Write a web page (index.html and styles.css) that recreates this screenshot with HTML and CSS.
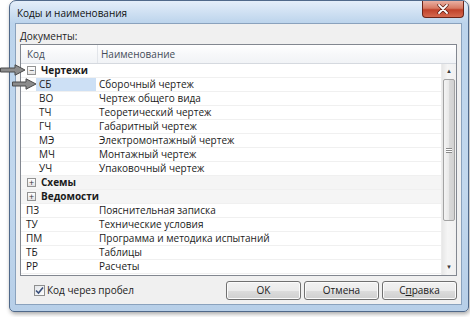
FILE: index.html
```html
<!DOCTYPE html>
<html lang="ru">
<head>
    <meta charset="UTF-8">
    <title>Коды и наименования</title>
    <link rel="stylesheet" href="styles.css">
</head>
<body>

    <!-- Dialog window -->
    <div class="window">
        <div class="titlebar">
            <span class="title">Коды и наименования</span>
            <span class="close-btn">
                <svg width="12" height="10" viewBox="0 0 12 10">
                    <path d="M2 1 L10 9 M10 1 L2 9" stroke="#5a1a10" stroke-width="3.2" stroke-linecap="round"/>
                    <path d="M2 1 L10 9 M10 1 L2 9" stroke="#fff" stroke-width="1.8" stroke-linecap="round"/>
                </svg>
            </span>
        </div>

        <div class="client">
            <div class="label">Документы:</div>

            <!-- Codes list -->
            <div class="list">
                <div class="list-header">
                    <div class="col-code">Код</div>
                    <div class="col-name">Наименование</div>
                </div>
                <div class="list-body">
                    <div class="rows">
                        <div class="row group"><span class="expander">&minus;</span><b>Чертежи</b></div>
                        <div class="row child selected"><span class="code"><span>СБ</span></span><span class="name">Сборочный чертеж</span></div>
                        <div class="row child"><span class="code"><span>ВО</span></span><span class="name">Чертеж общего вида</span></div>
                        <div class="row child"><span class="code"><span>ТЧ</span></span><span class="name">Теоретический чертеж</span></div>
                        <div class="row child"><span class="code"><span>ГЧ</span></span><span class="name">Габаритный чертеж</span></div>
                        <div class="row child"><span class="code"><span>МЭ</span></span><span class="name">Электромонтажный чертеж</span></div>
                        <div class="row child"><span class="code"><span>МЧ</span></span><span class="name">Монтажный чертеж</span></div>
                        <div class="row child"><span class="code"><span>УЧ</span></span><span class="name">Упаковочный чертеж</span></div>
                        <div class="row group closed"><span class="expander">+</span><b>Схемы</b></div>
                        <div class="row group closed"><span class="expander">+</span><b>Ведомости</b></div>
                        <div class="row top"><span class="code">ПЗ</span><span class="name">Пояснительная записка</span></div>
                        <div class="row top"><span class="code">ТУ</span><span class="name">Технические условия</span></div>
                        <div class="row top"><span class="code">ПМ</span><span class="name">Программа и методика испытаний</span></div>
                        <div class="row top"><span class="code">ТБ</span><span class="name">Таблицы</span></div>
                        <div class="row top"><span class="code">РР</span><span class="name">Расчеты</span></div>
                    </div>
                    <div class="scrollbar">
                        <div class="sb-btn">&#9650;</div>
                        <div class="sb-thumb"><span class="grip"></span></div>
                        <div class="sb-track"></div>
                        <div class="sb-btn">&#9660;</div>
                    </div>
                </div>
            </div>

            <!-- Footer -->
            <div class="footer">
                <label class="check">
                    <span class="checkbox">
                        <svg width="9" height="9" viewBox="0 0 9 9">
                            <path d="M1 4.5 L3.5 7 L8 1.5" fill="none" stroke="#3a4f7a" stroke-width="1.6"/>
                        </svg>
                    </span>
                    Код через пробел
                </label>
                <div class="buttons">
                    <button class="btn">OK</button>
                    <button class="btn">Отмена</button>
                    <button class="btn">С<u>п</u>равка</button>
                </div>
            </div>
        </div>
    </div>

    <!-- Pointer arrows over the tree -->
    <svg class="arrow arrow-group" width="26" height="12" viewBox="0 0 26 12">
        <path d="M0.5 4 H15 V0.8 L25 6 L15 11.2 V8 H0.5 Z" fill="#8c8c8c" stroke="#4a4a4a" stroke-width="1"/>
    </svg>
    <svg class="arrow arrow-item" width="25" height="12" viewBox="0 0 25 12">
        <path d="M0.5 4 H14 V0.8 L24 6 L14 11.2 V8 H0.5 Z" fill="#8c8c8c" stroke="#4a4a4a" stroke-width="1"/>
    </svg>

</body>
</html>
```

FILE: styles.css
```css
/* Reset */
* {
    margin: 0;
    padding: 0;
    box-sizing: border-box;
}

body {
    width: 470px;
    height: 317px;
    background: #fff;
    font-family: "Open Sans", "Noto Sans", sans-serif;
    font-size: 10px;
    color: #1b1b1b;
    overflow: hidden;
    position: relative;
}

/* Window frame */
.window {
    margin-left: 9px;
    width: 460px;
    height: 312px;
    border: 1px solid #50698a;
    border-radius: 7px 7px 5px 5px;
    background: linear-gradient(#e4eef9, #bcd4ec 22px, #c2d8ee 60%, #b7cfe8);
    padding: 0 6px 6px 5px;
    box-shadow: 1px 2px 4px rgba(0, 0, 0, 0.35);
    display: flex;
    flex-direction: column;
}

.titlebar {
    height: 22px;
    display: flex;
    justify-content: space-between;
}

.title {
    font-size: 10px;
    line-height: 24px;
    padding-left: 2px;
    color: #111;
}

.close-btn {
    width: 42px;
    height: 17px;
    margin-right: -2px;
    border: 1px solid #6b2418;
    border-top: none;
    border-radius: 0 0 4px 4px;
    background: linear-gradient(#eab0a2, #d77a63 45%, #c0422a 55%, #d5694f);
    display: flex;
    align-items: center;
    justify-content: center;
}

/* Client area */
.client {
    flex: 1;
    background: #f0f0f0;
    border: 1px solid #8aa2bd;
    padding: 4px 4px 0 4px;
    display: flex;
    flex-direction: column;
}

.label {
    height: 16px;
    line-height: 16px;
    color: #222;
}

/* List view */
.list {
    height: 232px;
    border: 1px solid #828790;
    background: #fff;
}

.list-header {
    height: 19px;
    display: grid;
    grid-template-columns: 77px 1fr;
    background: linear-gradient(#ffffff, #f7f8fa 50%, #f1f3f6);
    border-bottom: 1px solid #d5d9df;
    color: #444c58;
    line-height: 18px;
}

.col-code {
    padding-left: 6px;
    border-right: 1px solid #e2e5ea;
}

.col-name {
    padding-left: 3px;
}

.list-body {
    height: 211px;
    display: flex;
}

.rows {
    flex: 1;
}

.row {
    height: 14px;
    line-height: 13px;
    border-bottom: 1px solid #f0f0f0;
    display: grid;
    grid-template-columns: 77px 1fr;
    white-space: nowrap;
}

.row.group {
    display: flex;
    align-items: center;
}

.row.closed {
    background: #f5f5f5;
}

.expander {
    width: 9px;
    height: 9px;
    margin: 0 5px 0 6px;
    border: 1px solid #929292;
    background: linear-gradient(#fff, #e4e4e4);
    font-size: 9px;
    line-height: 7px;
    text-align: center;
    color: #333;
}

.row b {
    font-weight: 700;
}

.row.child .code span {
    display: block;
    margin-left: 15px;
    width: 60px;
    padding-left: 3px;
}

.row.selected .code span {
    background: #cde0f5;
}

.row.top .code {
    padding-left: 5px;
}

.name {
    padding-left: 1px;
}

/* Scrollbar */
.scrollbar {
    width: 15px;
    display: flex;
    flex-direction: column;
    background: linear-gradient(90deg, #e7e7e7, #f5f5f5 40%, #f0f0f0);
    border-left: 1px solid #ececec;
}

.sb-btn {
    height: 15px;
    font-size: 6px;
    line-height: 15px;
    text-align: center;
    color: #3c3c3c;
}

.sb-thumb {
    height: 142px;
    margin: 0 1px;
    border: 1px solid #a3a3a3;
    border-radius: 2px;
    background: linear-gradient(90deg, #f4f4f4, #e8e8e8 50%, #d9d9d9 51%, #d2d2d2);
    display: flex;
    align-items: center;
    justify-content: center;
}

.grip {
    width: 6px;
    height: 5px;
    border-top: 1px solid #8a8a8a;
    border-bottom: 1px solid #8a8a8a;
    background: linear-gradient(#fff 40%, #8a8a8a 40%, #8a8a8a 60%, #fff 60%);
}

.sb-track {
    flex: 1;
}

/* Footer */
.footer {
    flex: 1;
    display: flex;
    align-items: center;
    justify-content: space-between;
    padding-left: 14px;
}

.check {
    display: flex;
    align-items: center;
    color: #1b1b1b;
}

.checkbox {
    width: 11px;
    height: 11px;
    margin-right: 2px;
    border: 1px solid #8e8f8f;
    background: linear-gradient(135deg, #e3e6ea, #fdfdfd);
    display: flex;
    align-items: center;
    justify-content: center;
}

.buttons {
    display: flex;
    gap: 3px;
}

.btn {
    width: 75px;
    height: 19px;
    border: 1px solid #707070;
    border-radius: 3px;
    background: linear-gradient(#f2f2f2, #ebebeb 50%, #dddddd 51%, #cfcfcf);
    font-family: inherit;
    font-size: 10px;
    color: #1b1b1b;
    box-shadow: inset 0 0 0 1px #fbfbfb;
}

/* Pointer arrows */
.arrow {
    position: absolute;
}

.arrow-group {
    left: 0;
    top: 64px;
}

.arrow-item {
    left: 12px;
    top: 78px;
}
```
